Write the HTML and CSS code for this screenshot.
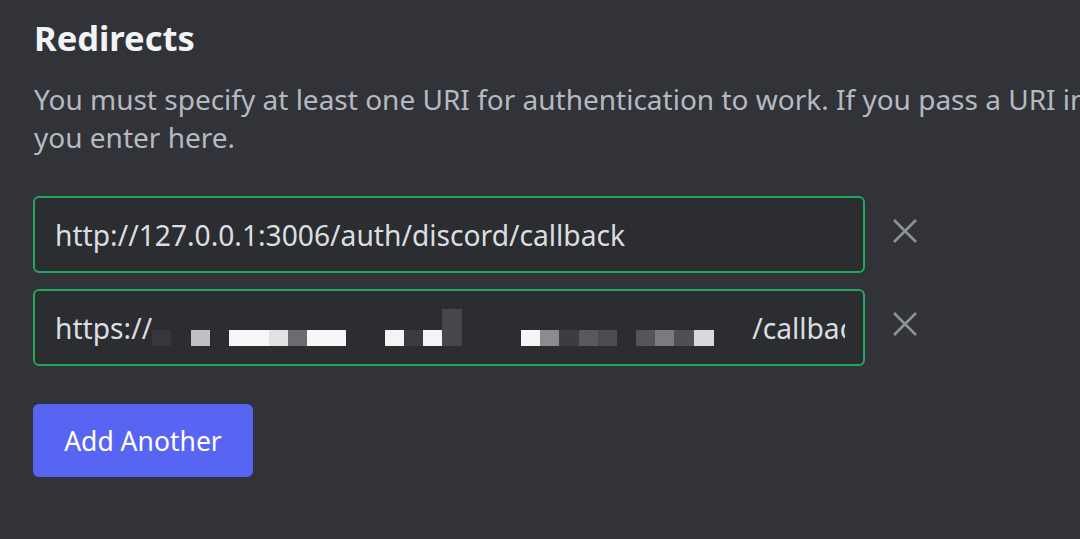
FILE: index.html
```html
<!DOCTYPE html>
<html lang="en">
<head>
    <meta charset="utf-8" />
    <title>Redirects</title>
    <link rel="stylesheet" href="styles.css">
</head>
<body>

    <!-- Redirects section -->
    <div class="section">
        <h2 class="section-title">Redirects</h2>
        <p class="section-desc">
            You must specify at least one URI for authentication to work. If you pass a URI in an OAuth request, it must exactly match one of the URIs<br>
            you enter here.
        </p>

        <div class="redirect-list">
            <div class="redirect-row">
                <div class="uri-field">
                    <span class="uri-text">http://127.0.0.1:3006/auth/discord/callback</span>
                </div>
                <button class="remove-btn" title="Remove">
                    <svg viewBox="0 0 24 24" width="24" height="24"><path d="M1 1 L23 23 M23 1 L1 23" /></svg>
                </button>
            </div>

            <div class="redirect-row">
                <div class="uri-field">
                    <span class="uri-text">https://<span class="redact">
                        <i class="c faint" style="width:19px"></i><i style="width:20px"></i>
                        <i class="c" style="width:19px;background:#c0c0c2"></i><i style="width:19px"></i>
                        <i class="c" style="width:40px;background:#f6f6f6"></i><i class="c" style="width:19px;background:#e2e2e3"></i><i class="c" style="width:19px;background:#6c6c70"></i><i class="c" style="width:39px;background:#f7f7f7"></i><i style="width:39px"></i>
                        <i class="c" style="width:19px;background:#f4f4f4"></i><i class="c" style="width:19px;background:#3b3c41"></i><i class="c" style="width:19px;background:#f4f4f4"></i><i class="c tall" style="width:20px;background:#46474c"></i><i style="width:59px"></i>
                        <i class="c" style="width:19px;background:#f5f5f5"></i><i class="c" style="width:19px;background:#8c8c90"></i><i class="c" style="width:20px;background:#3c3d42"></i><i class="c" style="width:19px;background:#58595e"></i><i class="c" style="width:19px;background:#4b4c51"></i><i style="width:19px"></i>
                        <i class="c" style="width:19px;background:#54555a"></i><i class="c" style="width:19px;background:#7b7b7f"></i><i class="c" style="width:20px;background:#4f5055"></i><i class="c" style="width:20px;background:#d9d9d9"></i>
                    </span>/callback</span>
                </div>
                <button class="remove-btn" title="Remove">
                    <svg viewBox="0 0 24 24" width="24" height="24"><path d="M1 1 L23 23 M23 1 L1 23" /></svg>
                </button>
            </div>
        </div>

        <button class="add-btn">Add Another</button>
    </div>

</body>
</html>
```

FILE: styles.css
```css
body {
    background-color: #313338;
    font-family: 'Noto Sans', 'Open Sans', sans-serif;
    margin: 0;
    padding: 0;
    overflow: hidden;
}

.section {
    padding: 14px 0 0 34px;
}

.section-title {
    margin: 0;
    color: #f2f3f5;
    font-size: 34.5px;
    font-weight: 700;
    line-height: 48px;
}

.section-desc {
    margin: 18px 0 0 0;
    color: #b5bac1;
    font-size: 28px;
    line-height: 38px;
    white-space: nowrap;
}

.redirect-list {
    display: flex;
    flex-direction: column;
    gap: 16px;
    margin-top: 40px;
}

.redirect-row {
    display: flex;
    align-items: center;
}

.uri-field {
    display: flex;
    align-items: center;
    box-sizing: border-box;
    width: 832px;
    height: 77px;
    margin-left: -1px;
    padding: 0 18px 0 20px;
    background-color: #2b2d31;
    border: 2px solid #23a55a;
    border-radius: 6px;
}

.uri-text {
    flex: 1;
    overflow: hidden;
    white-space: nowrap;
    color: #dbdee1;
    font-size: 28.2px;
}

.redact {
    display: inline-flex;
    align-items: flex-end;
    width: 600px;
    height: 37px;
    vertical-align: -7px;
}

    .redact i {
        display: block;
        height: 16px;
        flex-shrink: 0;
    }

    .redact .faint {
        background-color: #36373c;
    }

    .redact .tall {
        height: 37px;
    }

.remove-btn {
    display: flex;
    align-items: center;
    justify-content: center;
    width: 40px;
    height: 40px;
    margin: 0 0 7px 20px;
    padding: 0;
    background: none;
    border: none;
    cursor: pointer;
}

    .remove-btn svg path {
        stroke: #8e9297;
        stroke-width: 2.6;
        fill: none;
    }

.add-btn {
    margin-top: 38px;
    margin-left: -1px;
    width: 220px;
    height: 73px;
    background-color: #5865f2;
    color: #ffffff;
    border: none;
    border-radius: 6px;
    font-family: 'Noto Sans', 'Open Sans', sans-serif;
    font-size: 26.5px;
    cursor: pointer;
}
```
